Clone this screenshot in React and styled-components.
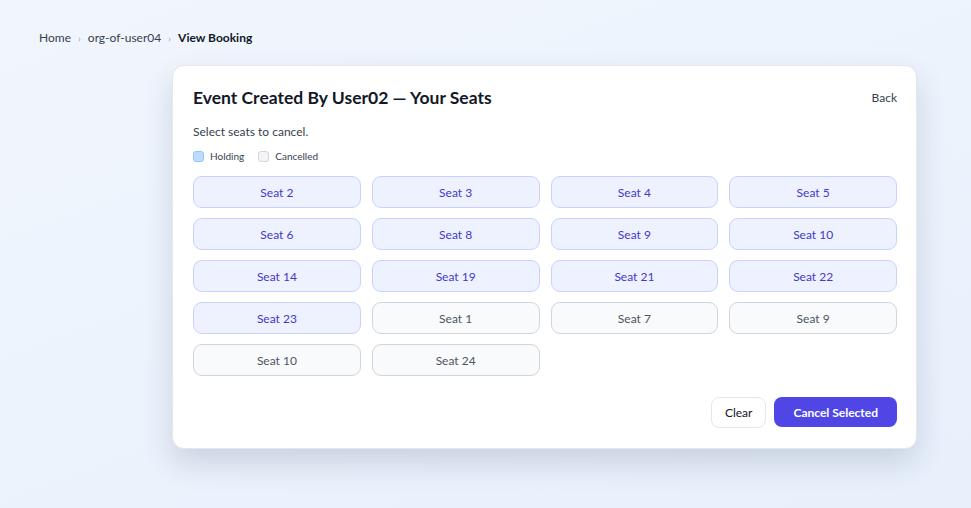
import React from "react";
import styled, { createGlobalStyle } from "styled-components";

const GlobalStyle = createGlobalStyle`
  html, body {
    margin: 0;
    padding: 0;
  }
  body {
    font-family: "Lato", "Noto Sans", sans-serif;
    background: linear-gradient(160deg, #f1f6fd 0%, #e8f0fc 100%);
    min-height: 508px;
    color: #111827;
  }
`;

const holding = [2, 3, 4, 5, 6, 8, 9, 10, 14, 19, 21, 22, 23];
const cancelled = [1, 7, 9, 10, 24];

function App() {
  return (
    <>
      <GlobalStyle />
      <Page>
        <Crumbs>
          <CrumbLink>Home</CrumbLink>
          <Sep>›</Sep>
          <CrumbLink>org-of-user04</CrumbLink>
          <Sep>›</Sep>
          <CrumbCurrent>View Booking</CrumbCurrent>
        </Crumbs>

        <Card>
          <Header>
            <Title>Event Created By User02 — Your Seats</Title>
            <BackLink>Back</BackLink>
          </Header>
          <Hint>Select seats to cancel.</Hint>
          <Legend>
            <LegendItem>
              <Swatch $kind="holding" />
              Holding
            </LegendItem>
            <LegendItem>
              <Swatch $kind="cancelled" />
              Cancelled
            </LegendItem>
          </Legend>

          <SeatGrid>
            {holding.map((n) => (
              <Seat key={"h" + n} $kind="holding">
                Seat {n}
              </Seat>
            ))}
            {cancelled.map((n) => (
              <Seat key={"c" + n} $kind="cancelled">
                Seat {n}
              </Seat>
            ))}
          </SeatGrid>

          <Actions>
            <ClearButton>Clear</ClearButton>
            <PrimaryButton>Cancel Selected</PrimaryButton>
          </Actions>
        </Card>
      </Page>
    </>
  );
}

const Page = styled.div`
  padding: 28px 39px 60px;
  display: flex;
  flex-direction: column;
`;

const Crumbs = styled.nav`
  display: flex;
  align-items: center;
  gap: 7px;
  font-size: 12px;
  height: 19px;
`;

const CrumbLink = styled.span`
  color: #374151;
`;

const Sep = styled.span`
  color: #9ca3af;
  font-size: 10px;
`;

const CrumbCurrent = styled.span`
  color: #111827;
  font-weight: 700;
`;

const Card = styled.section`
  margin-top: 18px;
  margin-left: 133px;
  width: 745px;
  box-sizing: border-box;
  background: #ffffff;
  border-radius: 12px;
  border: 1px solid #e5e7eb;
  box-shadow: 0 14px 30px rgba(30, 41, 80, 0.16);
  padding: 19px 19px 20px 20px;
`;

const Header = styled.div`
  display: flex;
  align-items: center;
  justify-content: space-between;
  height: 24px;
`;

const Title = styled.h2`
  margin: 0;
  font-size: 17.5px;
  font-weight: 700;
  color: #111827;
`;

const BackLink = styled.span`
  font-size: 12px;
  color: #374151;
  padding-top: 1px;
`;

const Hint = styled.p`
  margin: 15px 0 0;
  font-size: 12px;
  color: #374151;
`;

const Legend = styled.div`
  display: flex;
  gap: 14px;
  margin-top: 11px;
  font-size: 10px;
  color: #374151;
`;

const LegendItem = styled.span`
  display: flex;
  align-items: center;
  gap: 6px;
`;

const Swatch = styled.span`
  width: 9px;
  height: 9px;
  border-radius: 3px;
  border: 1px solid ${(p) => (p.$kind === "holding" ? "#93c5fd" : "#d1d5db")};
  background: ${(p) => (p.$kind === "holding" ? "#bfdbfe" : "#f3f4f6")};
`;

const SeatGrid = styled.div`
  display: grid;
  grid-template-columns: repeat(4, 1fr);
  column-gap: 11px;
  row-gap: 10px;
  margin-top: 14px;
`;

const Seat = styled.button`
  height: 32px;
  border-radius: 9px;
  font-family: inherit;
  font-size: 12px;
  cursor: pointer;
  border: 1px solid ${(p) => (p.$kind === "holding" ? "#c7d2fe" : "#d1d5db")};
  background: ${(p) => (p.$kind === "holding" ? "#eef2ff" : "#f9fafb")};
  color: ${(p) => (p.$kind === "holding" ? "#4338ca" : "#4b5563")};
`;

const Actions = styled.div`
  display: flex;
  justify-content: flex-end;
  gap: 8px;
  margin-top: 21px;
`;

const ClearButton = styled.button`
  height: 31px;
  padding: 0 13px;
  border-radius: 8px;
  border: 1px solid #e5e7eb;
  background: #ffffff;
  color: #111827;
  font-family: inherit;
  font-size: 12px;
`;

const PrimaryButton = styled.button`
  height: 30px;
  padding: 0 19px;
  border-radius: 8px;
  border: none;
  background: #4f46e5;
  color: #ffffff;
  font-family: inherit;
  font-size: 12px;
  font-weight: 700;
`;

export default App;
